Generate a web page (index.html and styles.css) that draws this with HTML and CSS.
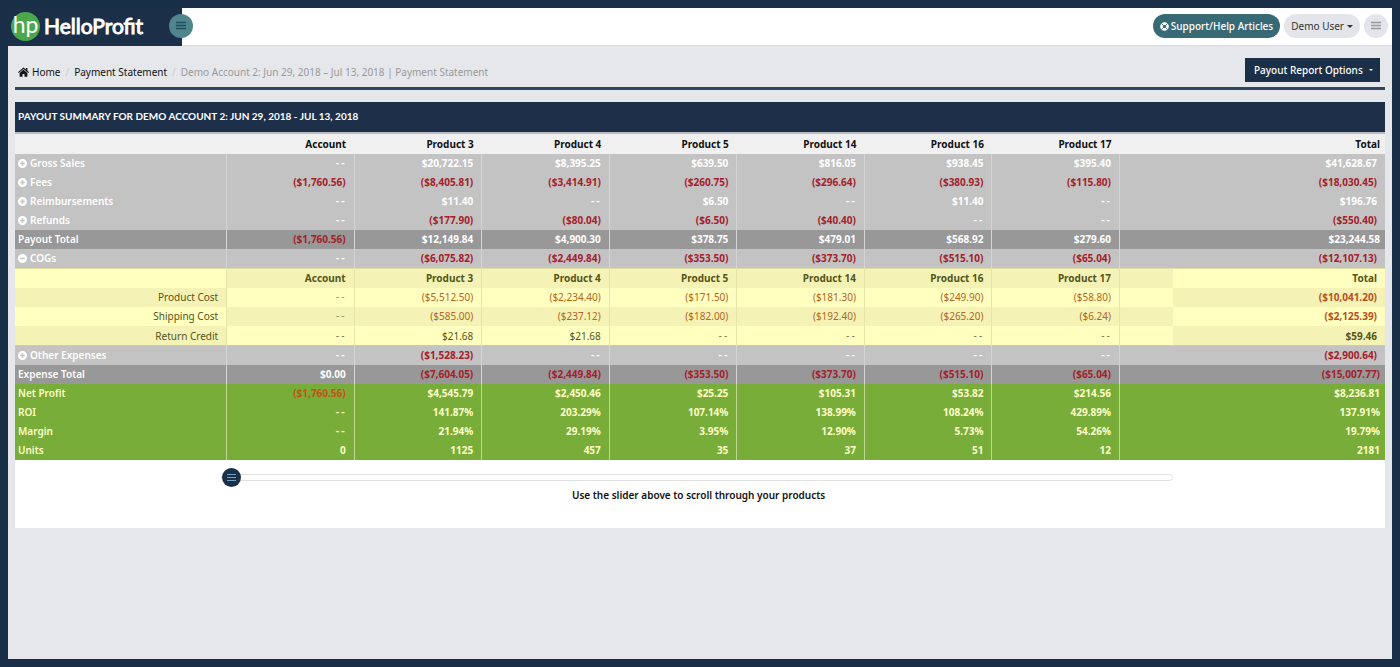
FILE: index.html
```html
<!DOCTYPE html>
<html lang="en">
<head>
<meta charset="utf-8">
<title>HelloProfit - Payment Statement</title>
<link rel="stylesheet" href="styles.css">
</head>
<body>
<svg class="sprite" aria-hidden="true">
  <symbol id="plus" viewBox="0 0 16 16"><path fill="currentColor" fill-rule="evenodd" d="M8 0a8 8 0 1 0 0 16A8 8 0 0 0 8 0ZM6.6 4h2.8v2.6H12v2.8H9.4V12H6.6V9.4H4V6.6h2.6Z"/></symbol>
  <symbol id="minus" viewBox="0 0 16 16"><path fill="currentColor" fill-rule="evenodd" d="M8 0a8 8 0 1 0 0 16A8 8 0 0 0 8 0ZM4 6.6h8v2.8H4Z"/></symbol>
  <symbol id="bars" viewBox="0 0 12 12"><path d="M1 2.5h10M1 5.5h10M1 8.5h10" fill="none" stroke="currentColor" stroke-width="1.4"/></symbol>
</svg>
<div class="page">
  <header class="topbar">
    <div class="brand">
      <a class="logo" href="#"><span class="logo-mark">hp</span><span class="logo-name">HelloProfit</span></a>
      <button class="round toggle" type="button" aria-label="Toggle menu"><svg><use href="#bars"/></svg></button>
    </div>
    <nav class="tools">
      <a class="pill support" href="#"><svg viewBox="0 0 16 16"><circle cx="8" cy="8" r="5.4" fill="none" stroke="currentColor" stroke-width="4.6"/><path d="M2.5 2.5l3.4 3.4M13.5 2.5l-3.4 3.4M2.5 13.5l3.4-3.4M13.5 13.5l-3.4-3.4" stroke="#386a76" stroke-width="1.6"/></svg>Support/Help Articles</a>
      <button class="pill user" type="button">Demo User<span class="caret"></span></button>
      <button class="round menu" type="button" aria-label="Menu"><svg><use href="#bars"/></svg></button>
    </nav>
  </header>
  <main>
    <div class="crumb-row">
      <ol class="crumbs">
        <li><a href="#"><svg viewBox="0 0 16 14"><path fill="currentColor" d="M8 0.5 0 7.2l1 1.2L8 2.6l7 5.8 1-1.2-2.3-2V1h-2.2v2.4ZM8 3.9 2.4 8.5V14h4.2V9.8h2.8V14h4.2V8.5Z"/></svg>Home</a></li>
        <li><a href="#">Payment Statement</a></li>
        <li class="current">Demo Account 2: Jun 29, 2018 – Jul 13, 2018 | Payment Statement</li>
      </ol>
      <button class="options" type="button"><span>Payout Report Options</span><span class="caret"></span></button>
    </div>
    <section class="panel">
      <h1>PAYOUT SUMMARY FOR DEMO ACCOUNT 2: JUN 29, 2018 - JUL 13, 2018</h1>
      <table>
        <colgroup><col class="c-label"><col class="c-item" span="7"><col><col class="c-total"></colgroup>
        <thead>
          <tr><td></td><th>Account</th><th>Product 3</th><th>Product 4</th><th>Product 5</th><th>Product 14</th><th>Product 16</th><th>Product 17</th><td></td><th>Total</th></tr>
        </thead>
        <tbody class="group">
          <tr><th><button type="button"><svg><use href="#plus"/></svg>Gross Sales</button></th><td class="none">--</td><td>$20,722.15</td><td>$8,395.25</td><td>$639.50</td><td>$816.05</td><td>$938.45</td><td>$395.40</td><td></td><td>$41,628.67</td></tr>
          <tr class="loss"><th><button type="button"><svg><use href="#plus"/></svg>Fees</button></th><td>($1,760.56)</td><td>($8,405.81)</td><td>($3,414.91)</td><td>($260.75)</td><td>($296.64)</td><td>($380.93)</td><td>($115.80)</td><td></td><td>($18,030.45)</td></tr>
          <tr><th><button type="button"><svg><use href="#plus"/></svg>Reimbursements</button></th><td class="none">--</td><td>$11.40</td><td class="none">--</td><td>$6.50</td><td class="none">--</td><td>$11.40</td><td class="none">--</td><td></td><td>$196.76</td></tr>
          <tr class="loss"><th><button type="button"><svg><use href="#plus"/></svg>Refunds</button></th><td class="none">--</td><td>($177.90)</td><td>($80.04)</td><td>($6.50)</td><td>($40.40)</td><td class="none">--</td><td class="none">--</td><td></td><td>($550.40)</td></tr>
        </tbody>
        <tbody class="sum">
          <tr><th>Payout Total</th><td class="neg">($1,760.56)</td><td>$12,149.84</td><td>$4,900.30</td><td>$378.75</td><td>$479.01</td><td>$568.92</td><td>$279.60</td><td></td><td>$23,244.58</td></tr>
        </tbody>
        <tbody class="group">
          <tr class="loss"><th><button type="button"><svg><use href="#minus"/></svg>COGs</button></th><td class="none">--</td><td>($6,075.82)</td><td>($2,449.84)</td><td>($353.50)</td><td>($373.70)</td><td>($515.10)</td><td>($65.04)</td><td></td><td>($12,107.13)</td></tr>
        </tbody>
        <tbody class="detail">
          <tr class="head"><td></td><th>Account</th><th>Product 3</th><th>Product 4</th><th>Product 5</th><th>Product 14</th><th>Product 16</th><th>Product 17</th><td></td><th>Total</th></tr>
          <tr class="loss"><th>Product Cost</th><td class="none">--</td><td>($5,512.50)</td><td>($2,234.40)</td><td>($171.50)</td><td>($181.30)</td><td>($249.90)</td><td>($58.80)</td><td></td><td>($10,041.20)</td></tr>
          <tr class="loss"><th>Shipping Cost</th><td class="none">--</td><td>($585.00)</td><td>($237.12)</td><td>($182.00)</td><td>($192.40)</td><td>($265.20)</td><td>($6.24)</td><td></td><td>($2,125.39)</td></tr>
          <tr class="last"><th>Return Credit</th><td class="none">--</td><td>$21.68</td><td>$21.68</td><td class="none">--</td><td class="none">--</td><td class="none">--</td><td class="none">--</td><td></td><td>$59.46</td></tr>
        </tbody>
        <tbody class="group">
          <tr class="loss"><th><button type="button"><svg><use href="#plus"/></svg>Other Expenses</button></th><td class="none">--</td><td>($1,528.23)</td><td class="none">--</td><td class="none">--</td><td class="none">--</td><td class="none">--</td><td class="none">--</td><td></td><td>($2,900.64)</td></tr>
        </tbody>
        <tbody class="sum">
          <tr class="loss"><th>Expense Total</th><td class="plain">$0.00</td><td>($7,604.05)</td><td>($2,449.84)</td><td>($353.50)</td><td>($373.70)</td><td>($515.10)</td><td>($65.04)</td><td></td><td>($15,007.77)</td></tr>
        </tbody>
        <tbody class="profit">
          <tr><th>Net Profit</th><td class="neg">($1,760.56)</td><td>$4,545.79</td><td>$2,450.46</td><td>$25.25</td><td>$105.31</td><td>$53.82</td><td>$214.56</td><td></td><td>$8,236.81</td></tr>
          <tr><th>ROI</th><td class="none">--</td><td>141.87%</td><td>203.29%</td><td>107.14%</td><td>138.99%</td><td>108.24%</td><td>429.89%</td><td></td><td>137.91%</td></tr>
          <tr><th>Margin</th><td class="none">--</td><td>21.94%</td><td>29.19%</td><td>3.95%</td><td>12.90%</td><td>5.73%</td><td>54.26%</td><td></td><td>19.79%</td></tr>
          <tr><th>Units</th><td>0</td><td>1125</td><td>457</td><td>35</td><td>37</td><td>51</td><td>12</td><td></td><td>2181</td></tr>
        </tbody>
      </table>
      <div class="scroller">
        <input id="scroll" type="range" min="0" max="100" value="0">
        <label for="scroll">Use the slider above to scroll through your products</label>
      </div>
    </section>
  </main>
</div>
</body>
</html>
```
FILE: styles.css
```css
* { box-sizing: border-box; }
body {
  margin: 0;
  padding: 8px;
  min-height: 100vh;
  display: flex;
  background: #192f48;
  font: 10px/16px "Noto Sans", "Open Sans", sans-serif;
  color: #222;
}
button { font: inherit; color: inherit; border: 0; padding: 0; background: none; cursor: pointer; }
a { color: inherit; text-decoration: none; }
.sprite { position: absolute; width: 0; height: 0; }
.page { flex: 1; background: #e5e7eb; }

.topbar { display: flex; justify-content: space-between; height: 38px; background: #fff; border-bottom: 1px solid #dcdee2; }
.brand { position: relative; width: 174px; height: 38px; padding: 0 0 2px 3px; background: #1b2f49; display: flex; align-items: center; }
.logo { display: flex; align-items: center; gap: 4px; color: #fff; font-family: Lato, sans-serif; }
.logo-mark { width: 29px; height: 29px; border-radius: 50%; background: #4aa74c; font-size: 23px; line-height: 25px; text-align: center; }
.logo-name { font-size: 21px; line-height: 28px; -webkit-text-stroke: 1px #fff; }
.round { width: 24px; height: 24px; border-radius: 50%; display: flex; align-items: center; justify-content: center; }
.round svg { width: 12px; height: 12px; }
.toggle { position: absolute; right: -11px; top: 6px; background: #4f858b; color: #1f4f60; }
.tools { display: flex; align-items: center; gap: 4px; padding: 0 4px 1px 0; }
.pill { display: flex; align-items: center; height: 24px; padding: 0 7px; border-radius: 12px; }
.support { background: #386a76; color: #fff; font-weight: 500; gap: 2px; }
.support svg { width: 9px; height: 9px; }
.user, .menu { background: #e4e5ea; }
.user { gap: 3px; color: #333; }
.menu { color: #999; }
.caret { border: 3px solid transparent; border-top-color: currentColor; border-bottom: 0; }

main { padding: 12px 7px; }
.crumb-row { display: flex; justify-content: space-between; align-items: flex-start; height: 32px; padding: 0 5px 0 3px; border-bottom: 3px solid #2f4560; }
.crumbs { display: flex; margin: 0; padding: 6px 0 0; list-style: none; color: #111; }
.crumbs li + li::before { content: "/"; color: #ccc; padding: 0 5px; }
.crumbs a { display: inline-flex; align-items: center; gap: 3px; }
.crumbs svg { width: 11px; height: 10px; }
.crumbs .current { color: #999; }
.options { display: flex; align-items: center; justify-content: space-between; width: 135px; height: 24px; padding: 0 7px 0 9px; background: #1b2f49; color: #fff; font-weight: 500; }
.options .caret { border-width: 2px; border-bottom: 0; }

.panel { margin-top: 12px; background: #fff; padding-bottom: 25px; }
h1 { margin: 0; padding: 0 3px; height: 32px; border-bottom: 2px solid #b9bcc2; background: #1e3049; color: #fff; font: 700 10px/29px Lato, sans-serif; }

table { width: 100%; table-layout: fixed; border-collapse: collapse; font-weight: 700; line-height: 19px; }
.c-label { width: 15.45%; }
.c-total { width: 15.5%; }
.c-item { width: 9.31%; }
th, td { height: 19px; padding: 0 8px; text-align: right; font-weight: inherit; white-space: nowrap; }
tbody th:first-child { text-align: left; padding: 0 3px; font-weight: 600; }
tbody td:nth-child(n+2):nth-child(-n+9), .head th:nth-child(-n+8) { border-left: 1px solid #d4d4d4; }
th button { display: flex; align-items: center; gap: 3px; line-height: 19px; }
th svg { width: 9px; height: 9px; }
.none { font-family: "DejaVu Sans Mono", monospace; font-size: 9px; }
thead { background: #f0f0f0; color: #111; }
thead tr > *, .head > *, .last > * { height: 20px; }
thead th:last-child, .sum td:last-child, .profit td:last-child { padding-right: 5px; }
.group { background: #c3c3c3; color: #fff; }
.sum { background: #989898; color: #fff; }
.loss td, .sum .neg { color: #a5202b; }
.group .none, .sum .plain { color: #fff; }
.detail { color: #55551a; }
.detail > tr > th:first-child { text-align: right; font-weight: 400; padding-right: 8px; }
.detail td:not(:last-child) { font-weight: 400; }
.detail tr > * { background: #f4f3b5; }
.detail tr:nth-child(even) > *, .detail tr:nth-child(odd) > :first-child, .detail tr:nth-child(odd) > :last-child { background: #ffffc0; }
.detail tr:nth-child(even) > :first-child, .detail tr:nth-child(even) > :last-child { background: #f4f3b5; }
.detail tr > :nth-child(n+2):nth-child(-n+9) { border-left: 1px solid #e6e5a8; }
.detail .head > * { box-shadow: inset 0 1px #dfdda0; }
.detail .last > * { box-shadow: inset 0 -1px #cfcda0; line-height: 18px; }
.detail .loss td { color: #b5651d; }
.detail .loss td:last-child { color: #b8501d; }
.detail .loss .none { color: #77773c; }
.profit { background: #79ad3a; color: #ffffc8; }
.profit td:nth-child(n+2):nth-child(-n+9) { border-left-color: #c0d890; }
.profit .neg { color: #c4501c; }

.scroller { width: 69.5%; margin-left: 15%; padding-top: 8px; display: flex; flex-direction: column; font-weight: 600; }
.scroller label { text-align: center; padding-left: 4px; line-height: 16px; color: #111; }
input[type="range"] { appearance: none; width: 100%; height: 19px; margin: 0; background: none; }
input[type="range"]::-webkit-slider-runnable-track { height: 7px; border: 1px solid #e0e0e0; border-radius: 4px; background: #fff; }
input[type="range"]::-webkit-slider-thumb {
  appearance: none;
  width: 19px;
  height: 19px;
  margin-top: -7px;
  border-radius: 50%;
  background: repeating-linear-gradient(#6fa3bd 0 1px, #1b2f49 1px 3px) center / 9px 7px no-repeat #1b2f49;
}
```
